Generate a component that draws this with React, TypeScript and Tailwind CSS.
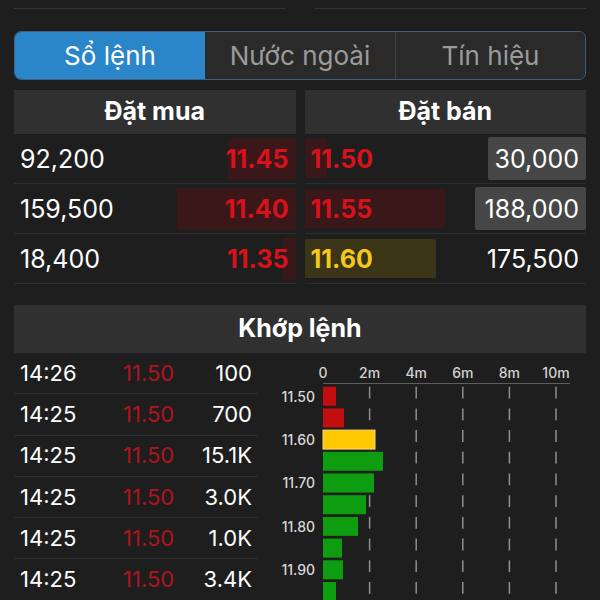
import React from 'react'

type BookRow = { qty: string; price: string; bar: string; barColor: string; priceColor: string; box?: string }

const bids: BookRow[] = [
  { qty: '92,200', price: '11.45', bar: 'w-[68px]', barColor: 'bg-[#3a181a]', priceColor: 'text-[#d9111b]' },
  { qty: '159,500', price: '11.40', bar: 'w-[119px]', barColor: 'bg-[#3a181a]', priceColor: 'text-[#d9111b]' },
  { qty: '18,400', price: '11.35', bar: 'w-[13px]', barColor: 'bg-[#3a181a]', priceColor: 'text-[#d9111b]' },
]

const asks: BookRow[] = [
  { qty: '30,000', price: '11.50', bar: 'w-[22px]', barColor: 'bg-[#3a181a]', priceColor: 'text-[#d9111b]', box: 'w-[98px]' },
  { qty: '188,000', price: '11.55', bar: 'w-[140px]', barColor: 'bg-[#3a181a]', priceColor: 'text-[#d9111b]', box: 'w-[111px]' },
  { qty: '175,500', price: '11.60', bar: 'w-[131px]', barColor: 'bg-[#3a3517]', priceColor: 'text-[#f4c81c]' },
]

const trades = [
  { time: '14:26', price: '11.50', vol: '100' },
  { time: '14:25', price: '11.50', vol: '700' },
  { time: '14:25', price: '11.50', vol: '15.1K' },
  { time: '14:25', price: '11.50', vol: '3.0K' },
  { time: '14:25', price: '11.50', vol: '1.0K' },
  { time: '14:25', price: '11.50', vol: '3.4K' },
]

// volume profile bars, width in px (2m = 46.6px)
const bars = [
  { w: 13, c: '#c20e0e' },
  { w: 21, c: '#c20e0e' },
  { w: 52, c: '#ffc800' },
  { w: 60, c: '#0e9c10' },
  { w: 51, c: '#0e9c10' },
  { w: 43, c: '#0e9c10' },
  { w: 35, c: '#0e9c10' },
  { w: 19, c: '#0e9c10' },
  { w: 20, c: '#0e9c10' },
  { w: 13, c: '#0e9c10' },
]

const VolumeChart = () => {
  const x0 = 65
  const ticks = ['0', '2m', '4m', '6m', '8m', '10m']
  const step = 46.6
  return (
    <svg width="327" height="247" className="block">
      {ticks.map((t, i) => (
        <text key={t} x={x0 + i * step} y={25} fill="#d2d2d2" fontSize="14" textAnchor="middle" fontFamily="Inter, sans-serif" fontWeight="500">
          {t}
        </text>
      ))}
      <line x1={x0} y1={30.5} x2={312} y2={30.5} stroke="#5e5e5e" strokeWidth="1" />
      {ticks.slice(1).map((t, i) =>
        bars.map((_, r) => (
          <line key={t + r} x1={x0 + (i + 1) * step} x2={x0 + (i + 1) * step} y1={33.7 + r * 21.7} y2={45.5 + r * 21.7} stroke="#8f8f8f" strokeWidth="1.5" />
        ))
      )}
      {bars.map((b, r) => (
        <rect
          key={r}
          x={x0}
          y={33.7 + r * 21.7}
          width={b.w}
          height={19}
          fill={b.c}
          stroke={r === 2 ? '#f2d77a' : 'none'}
          strokeWidth={r === 2 ? 1 : 0}
        />
      ))}
      {['11.50', '11.60', '11.70', '11.80', '11.90'].map((l, i) => (
        <text key={l} x={57} y={48.5 + i * 43.4} fill="#d8d8d8" fontSize="14" textAnchor="end" fontFamily="Inter, sans-serif" fontWeight="500">
          {l}
        </text>
      ))}
    </svg>
  )
}

const App = () => {
  return (
    <div className="w-[600px] h-[600px] overflow-hidden bg-[#1e1e1e] px-[14px] font-['Inter',sans-serif] text-white">
      <div className="flex gap-[30px] pt-[8px]">
        <div className="h-px flex-1 bg-[#353535]" />
        <div className="h-px flex-1 bg-[#353535]" />
      </div>

      <div className="mt-[22px] grid h-[49px] grid-cols-3 overflow-hidden rounded-[7px] border border-[#3b5f80] text-[26px]">
        <div className="flex items-center justify-center bg-[#2a86c8] text-white">Sổ lệnh</div>
        <div className="flex items-center justify-center bg-[#2a2a2a] text-[#9b9b9b]">Nước ngoài</div>
        <div className="flex items-center justify-center border-l border-[#444] bg-[#2a2a2a] text-[#9b9b9b]">Tín hiệu</div>
      </div>

      <div className="mt-[10px] grid grid-cols-2 gap-[9px]">
        <div>
          <div className="flex h-[44px] items-center justify-center bg-[#303030] text-[25px] font-bold">Đặt mua</div>
          {bids.map((r) => (
            <div key={r.price} className="relative flex h-[50px] items-center justify-between border-b border-[#2e2e2e] pl-[6px] pr-[7px] pt-[3px] text-[25px]">
              <div className={`absolute right-0 top-[4px] bottom-[3px] ${r.bar} ${r.barColor}`} />
              <span className="relative">{r.qty}</span>
              <span className={`relative font-bold ${r.priceColor}`}>{r.price}</span>
            </div>
          ))}
        </div>
        <div>
          <div className="flex h-[44px] items-center justify-center bg-[#303030] text-[25px] font-bold">Đặt bán</div>
          {asks.map((r) => (
            <div key={r.price} className="relative flex h-[50px] items-center justify-between border-b border-[#2e2e2e] pl-[6px] text-[25px]">
              <div className={`absolute left-0 top-[5px] bottom-[5px] ${r.bar} ${r.barColor}`} />
              <span className={`relative pt-[3px] font-bold ${r.priceColor}`}>{r.price}</span>
              {r.box ? (
                <span className={`relative flex h-[43px] items-center justify-end rounded-[2px] bg-[#464646] pr-[7px] pt-[3px] ${r.box}`}>{r.qty}</span>
              ) : (
                <span className="relative pr-[7px] pt-[3px]">{r.qty}</span>
              )}
            </div>
          ))}
        </div>
      </div>

      <div className="mt-[21px] flex h-[48px] items-center justify-center bg-[#303030] text-[25px] font-bold">Khớp lệnh</div>

      <div className="flex">
        <div className="w-[244px] shrink-0">
          {trades.map((t, i) => (
            <div key={i} className="grid h-[41.3px] grid-cols-[103px_60px_1fr] items-center border-b border-[#2e2e2e] pl-[6px] pr-[6px] text-[22px]">
              <span>{t.time}</span>
              <span className="text-[#b0141c]">{t.price}</span>
              <span className="text-right">{t.vol}</span>
            </div>
          ))}
        </div>
        <VolumeChart />
      </div>
    </div>
  )
}

export default App
